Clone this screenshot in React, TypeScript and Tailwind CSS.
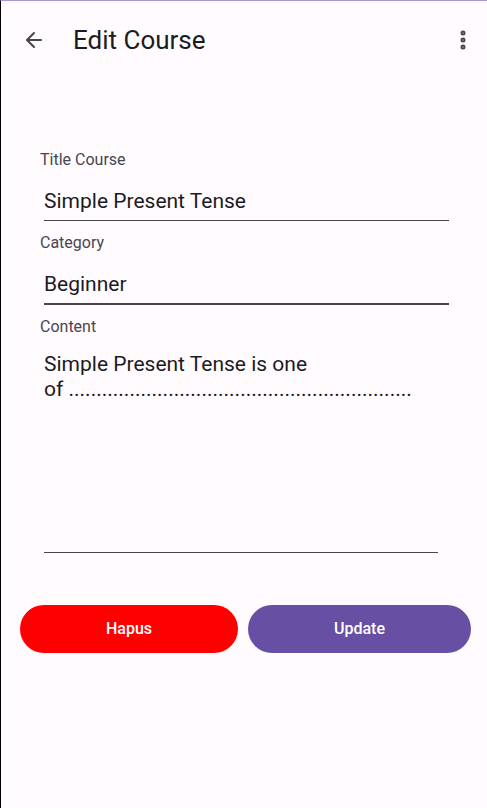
import { ArrowLeft, EllipsisVertical } from "lucide-react";

function Field({ label, value, thick }: { label: string; value: string; thick?: boolean }) {
  return (
    <div className="flex flex-col">
      <span className="pl-[39px] text-[16px] leading-[20px] text-[#49454f]">{label}</span>
      <div className="ml-[43px] mr-[38px] mt-[19px] h-[31px]">
        <span className="text-[21px] leading-[24px] text-[#1c1b1f]">{value}</span>
      </div>
      <div className={`ml-[43px] mr-[38px] bg-[#49454f] ${thick ? "h-[2px]" : "h-px"}`} />
    </div>
  );
}

export default function App() {
  return (
    <div
      className="w-[487px] h-[808px] bg-[#fffbfe] border-t border-t-[#a896d0] border-l border-l-black flex flex-col"
      style={{ fontFamily: "Roboto, 'Noto Sans', sans-serif" }}
    >
      {/* top bar */}
      <header className="h-[78px] flex items-center pl-[21px] pr-[12px]">
        <ArrowLeft className="w-[24px] h-[24px] text-[#49454f]" strokeWidth={2} />
        <h1 className="ml-[27px] text-[26px] text-[#1c1b1f] flex-1">Edit Course</h1>
        <EllipsisVertical className="w-[24px] h-[24px] text-[#49454f]" strokeWidth={3} />
      </header>

      <div className="mt-[71px] flex flex-col gap-[12px]">
        <Field label="Title Course" value="Simple Present Tense" />
        <Field label="Category" value="Beginner" thick />
        <div className="flex flex-col">
          <span className="pl-[39px] text-[16px] leading-[20px] text-[#49454f]">Content</span>
          <div className="ml-[43px] mr-[49px] mt-[15px] h-[200px]">
            <p className="text-[21px] leading-[25px] text-[#1c1b1f]">
              Simple Present Tense is one
              <br />
              of ..............................................................
            </p>
          </div>
          <div className="ml-[43px] mr-[49px] h-px bg-[#49454f]" />
        </div>
      </div>

      <div className="mt-[52px] flex gap-[10px] pl-[19px] pr-[16px]">
        <button className="w-[218px] h-[48px] rounded-full bg-[#ff0000] text-white text-[16px] font-medium">
          Hapus
        </button>
        <button className="flex-1 h-[48px] rounded-full bg-[#6750a4] text-white text-[16px] font-medium">
          Update
        </button>
      </div>
    </div>
  );
}
